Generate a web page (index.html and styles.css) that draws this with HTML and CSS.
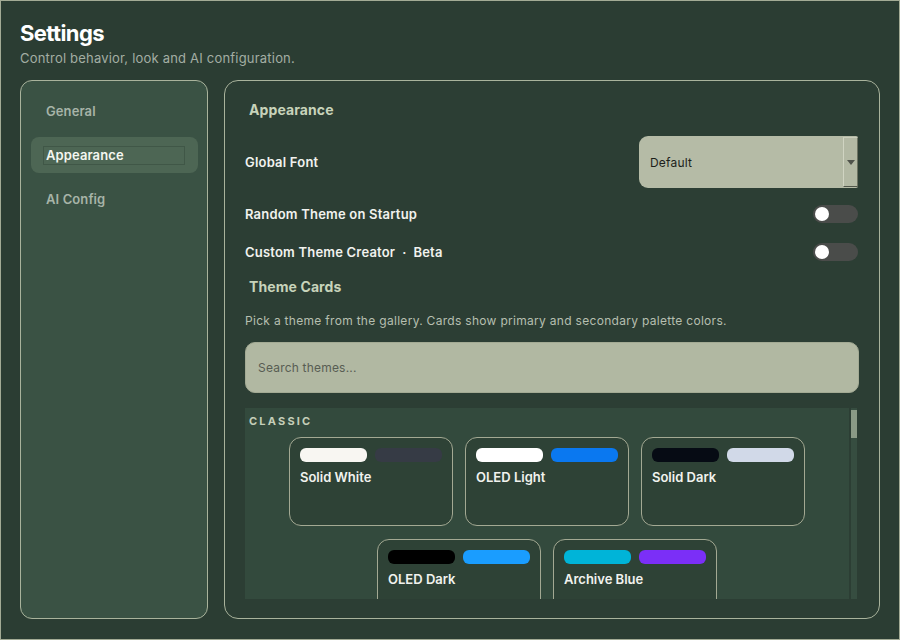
FILE: index.html
```html
<!DOCTYPE html>
<html>
<head>
<meta charset="utf-8">
<link rel="stylesheet" href="styles.css">
</head>
<body>
<div class="window">
  <header class="header">
    <h1 class="title">Settings</h1>
    <p class="subtitle">Control behavior, look and AI configuration.</p>
  </header>
  <div class="body">
    <nav class="sidebar">
      <div class="nav-item">General</div>
      <div class="nav-item active"><span class="nav-focus">Appearance</span></div>
      <div class="nav-item">AI Config</div>
    </nav>
    <main class="panel">
      <h2 class="section-title">Appearance</h2>
      <div class="row row-select">
        <span class="label">Global Font</span>
        <div class="select">
          <span class="select-value">Default</span>
          <span class="select-btn"><span class="arrow"></span></span>
        </div>
      </div>
      <div class="row">
        <span class="label">Random Theme on Startup</span>
        <span class="toggle"><span class="knob"></span></span>
      </div>
      <div class="row">
        <span class="label">Custom Theme Creator &nbsp;·&nbsp; Beta</span>
        <span class="toggle"><span class="knob"></span></span>
      </div>
      <h2 class="section-title section-cards">Theme Cards</h2>
      <p class="desc">Pick a theme from the gallery. Cards show primary and secondary palette colors.</p>
      <div class="search">Search themes...</div>
      <div class="gallery-wrap">
        <div class="gallery">
          <div class="group-label">CLASSIC</div>
          <div class="cards">
            <div class="card">
              <div class="swatches"><span class="swatch" style="background:#f8f6f2"></span><span class="swatch" style="background:#363b45"></span></div>
              <div class="card-name">Solid White</div>
            </div>
            <div class="card">
              <div class="swatches"><span class="swatch" style="background:#ffffff"></span><span class="swatch" style="background:#0a78f0"></span></div>
              <div class="card-name">OLED Light</div>
            </div>
            <div class="card">
              <div class="swatches"><span class="swatch" style="background:#060b14"></span><span class="swatch" style="background:#d1d9e8"></span></div>
              <div class="card-name">Solid Dark</div>
            </div>
            <div class="card">
              <div class="swatches"><span class="swatch" style="background:#000000"></span><span class="swatch" style="background:#1a9dff"></span></div>
              <div class="card-name">OLED Dark</div>
            </div>
            <div class="card">
              <div class="swatches"><span class="swatch" style="background:#00b4d8"></span><span class="swatch" style="background:#7b2ff7"></span></div>
              <div class="card-name">Archive Blue</div>
            </div>
          </div>
        </div>
        <div class="scrollbar"><div class="thumb"></div></div>
      </div>
    </main>
  </div>
</div>
</body>
</html>
```

FILE: styles.css
```css
* { box-sizing: border-box; }
html, body { margin: 0; padding: 0; }
body {
  font-family: Inter, "Noto Sans", "Liberation Sans", sans-serif;
  background: #2b3d33;
}
.window {
  width: 900px;
  height: 640px;
  border: 1px solid #a3ab95;
  background: #2b3d33;
  padding: 0 19px 20px 19px;
  display: flex;
  flex-direction: column;
  overflow: hidden;
}
.header { padding-top: 19px; height: 79px; }
.title {
  margin: 0;
  font-size: 22px;
  line-height: 26px;
  font-weight: 700;
  color: #ffffff;
  letter-spacing: -0.6px;
}
.subtitle {
  margin: 3px 0 0;
  font-size: 13px;
  line-height: 18px;
  color: #a3aea3;
  letter-spacing: 0.2px;
}
.body {
  flex: 1;
  display: flex;
  gap: 16px;
  min-height: 0;
}
.sidebar {
  width: 188px;
  flex: none;
  background: #3a5244;
  border: 1px solid #a9b39c;
  border-radius: 12px;
  padding: 12px 9px 0 10px;
  display: flex;
  flex-direction: column;
  gap: 8px;
}
.nav-item {
  height: 36px;
  display: flex;
  align-items: center;
  padding-left: 15px;
  font-size: 13px;
  font-weight: 600;
  color: #a7b4a8;
  border-radius: 8px;
  letter-spacing: 0.1px;
}
.nav-item.active {
  background: #4d6654;
  color: #f4f6f0;
  padding-left: 12px;
}
.nav-focus {
  width: 142px;
  height: 19px;
  line-height: 17px;
  padding-left: 2px;
  border: 1px solid rgba(40, 60, 48, 0.35);
}
.panel {
  width: 656px;
  flex: none;
  border: 1px solid #a9b39c;
  border-radius: 14px;
  background: #2c3e34;
  padding: 19px 21px 0 20px;
  display: flex;
  flex-direction: column;
}
.section-title {
  margin: 0 0 0 4px;
  font-size: 14px;
  line-height: 20px;
  font-weight: 700;
  color: #c7d3ba;
  letter-spacing: 0.1px;
}
.row {
  height: 38px;
  display: flex;
  align-items: center;
  justify-content: space-between;
}
.row-select {
  height: 52px;
  margin-top: 16px;
  margin-bottom: 7px;
}
.label {
  font-size: 13px;
  font-weight: 600;
  color: #f1f2ee;
  letter-spacing: 0.2px;
}
.select {
  width: 219px;
  height: 52px;
  background: #b5bba6;
  border-radius: 9px 2px 2px 9px;
  display: flex;
  align-items: center;
  justify-content: space-between;
  padding-left: 11px;
}
.select-value {
  font-size: 12px;
  color: #1c1f1b;
  letter-spacing: 0.2px;
}
.select-btn {
  width: 15px;
  height: 50px;
  border-left: 1px solid #d0d4c2;
  border-right: 1px solid #6d7362;
  border-bottom: 1px solid #50564a;
  border-top: 1px solid #c9cdbb;
  background: #b3b9a4;
  display: flex;
  align-items: center;
  justify-content: center;
}
.arrow {
  width: 0;
  height: 0;
  border-left: 4px solid transparent;
  border-right: 4px solid transparent;
  border-top: 5px solid #4f534b;
}
.toggle {
  width: 45px;
  height: 18px;
  border-radius: 9px;
  background: #4a4c4a;
  display: flex;
  align-items: center;
  padding-left: 2px;
}
.knob {
  width: 14px;
  height: 14px;
  border-radius: 50%;
  background: #ffffff;
}
.section-cards { margin-top: 6px; }
.desc {
  margin: 16px 0 0;
  font-size: 12px;
  line-height: 16px;
  color: #b6bfb0;
  letter-spacing: 0.3px;
}
.search {
  margin-top: 13px;
  height: 51px;
  width: 614px;
  background: #b1b8a2;
  border: 1px solid #a3aa94;
  border-radius: 10px;
  padding-left: 12px;
  display: flex;
  align-items: center;
  font-size: 12px;
  color: #585d53;
  letter-spacing: 0.2px;
}
.gallery-wrap {
  margin-top: 15px;
  height: 191px;
  display: flex;
  gap: 2px;
  width: 612px;
}
.gallery {
  flex: 1;
  background: #334a3d;
  padding: 5px 0 0 4px;
  overflow: hidden;
}
.group-label {
  font-size: 11px;
  line-height: 16px;
  font-weight: 700;
  letter-spacing: 2.2px;
  color: #c5cfb9;
}
.cards {
  margin-top: 8px;
  display: flex;
  flex-wrap: wrap;
  justify-content: center;
  gap: 13px 12px;
  padding-right: 4px;
}
.card {
  width: 164px;
  height: 89px;
  flex: none;
  border: 1px solid #a3a993;
  border-radius: 12px;
  background: #2e4236;
  padding: 10px 10px 0;
}
.swatches {
  display: flex;
  gap: 8px;
}
.swatch {
  flex: 1;
  height: 14px;
  border-radius: 6px;
}
.card-name {
  margin-top: 7px;
  font-size: 13px;
  line-height: 16px;
  font-weight: 600;
  color: #f1f2ee;
}
.scrollbar {
  width: 6px;
  background: #364d40;
  padding-top: 2px;
}
.thumb {
  height: 28px;
  background: #8a9a86;
}
```
